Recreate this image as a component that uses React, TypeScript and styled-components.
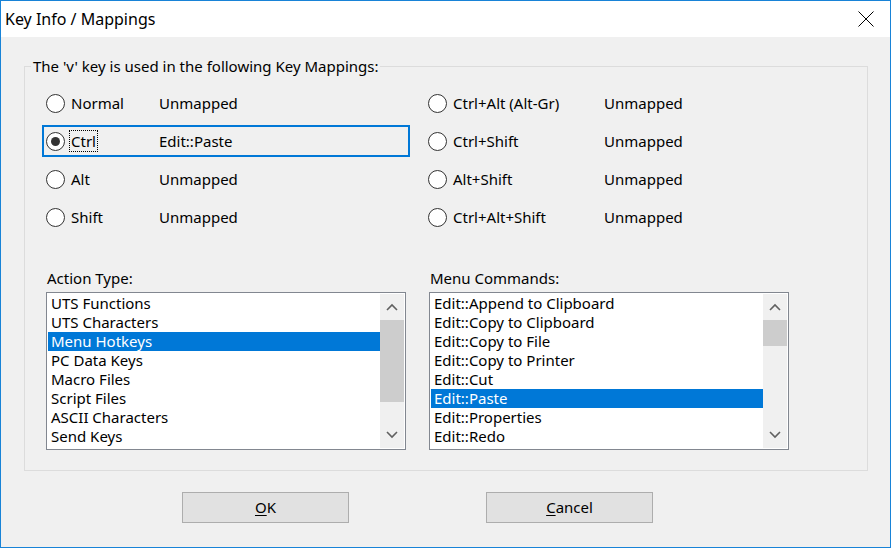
import styled, { createGlobalStyle } from 'styled-components'

const GlobalStyle = createGlobalStyle`
  html, body {
    margin: 0;
    padding: 0;
    background: #ffffff;
  }
  body {
    font-family: 'Noto Sans', 'Liberation Sans', Arial, sans-serif;
    font-size: 15px;
    color: #000;
  }
  * {
    box-sizing: border-box;
  }
`

const Window = styled.div`
  width: 891px;
  height: 548px;
  border: 1px solid #1883d7;
  display: flex;
  flex-direction: column;
  overflow: hidden;
`

const TitleBar = styled.div`
  height: 36px;
  flex: none;
  background: #ffffff;
  display: flex;
  align-items: center;
  justify-content: space-between;
  padding: 0 16px 0 4px;
`

const Title = styled.span`
  font-size: 16px;
  line-height: 20px;
  margin-top: -1px;
`

const CloseButton = styled.span`
  display: flex;
  width: 16px;
  height: 16px;
  margin-top: -1px;
`

const Body = styled.div`
  flex: 1;
  background: #f0f0f0;
  padding: 19px 22px 0 23px;
  display: flex;
  flex-direction: column;
`

const Group = styled.fieldset`
  margin: 0;
  padding: 11px 0 20px 17px;
  border: 1px solid #dcdcdc;
  min-width: 0;
`

const Legend = styled.legend`
  padding: 0 2px;
  margin-left: -11px;
  line-height: 20px;
`

const RadioGrid = styled.div`
  display: grid;
  grid-template-columns: 368px 1fr;
  column-gap: 14px;
  row-gap: 6px;
  grid-auto-flow: column;
  grid-template-rows: repeat(4, 32px);
`

const RadioRow = styled.div<{ $focused?: boolean }>`
  display: flex;
  align-items: center;
  height: 32px;
  padding-left: 2px;
  border: 2px solid ${(p) => (p.$focused ? '#0078d7' : 'transparent')};
`

const Circle = styled.span<{ $checked?: boolean }>`
  width: 19px;
  height: 19px;
  flex: none;
  border-radius: 50%;
  border: 1px solid #333;
  background: #fff;
  display: flex;
  align-items: center;
  justify-content: center;

  &::after {
    content: '';
    width: 9px;
    height: 9px;
    border-radius: 50%;
    background: #333;
    display: ${(p) => (p.$checked ? 'block' : 'none')};
  }
`

const RadioLabel = styled.span<{ $width: number; $focused?: boolean }>`
  width: ${(p) => p.$width}px;
  flex: none;
  margin-left: 4px;
  line-height: 20px;
  margin-top: -1px;

  span {
    padding: 0 1px;
    border: 1px dotted ${(p) => (p.$focused ? '#000' : 'transparent')};
  }
`

const Value = styled.span`
  line-height: 20px;
`

const ListsRow = styled.div`
  display: flex;
  gap: 23px;
  margin-top: 35px;
  margin-left: 4px;
`

const ListColumn = styled.div`
  display: flex;
  flex-direction: column;
  width: 360px;
`

const ListCaption = styled.div`
  line-height: 20px;
  padding-left: 1px;
  margin-bottom: 4px;
`

const ListBox = styled.div`
  height: 158px;
  border: 1px solid #828790;
  background: #fff;
  display: flex;
  padding: 1px;
`

const Items = styled.div`
  flex: 1;
  display: flex;
  flex-direction: column;
`

const Item = styled.div<{ $selected?: boolean }>`
  height: 19px;
  line-height: 18px;
  padding-left: 3px;
  white-space: nowrap;
  background: ${(p) => (p.$selected ? '#0078d7' : 'transparent')};
  color: ${(p) => (p.$selected ? '#fff' : '#000')};
`

const ScrollBar = styled.div`
  width: 24px;
  flex: none;
  background: #f0f0f0;
  display: flex;
  flex-direction: column;
`

const Arrow = styled.div`
  height: 26px;
  flex: none;
  display: flex;
  align-items: center;
  justify-content: center;
`

const Track = styled.div`
  flex: 1;
  position: relative;
`

const Thumb = styled.div`
  position: absolute;
  left: 0;
  right: 0;
  background: #cdcdcd;
`

const ButtonRow = styled.div`
  display: flex;
  gap: 137px;
  padding: 21px 0 0 158px;
`

const Button = styled.div`
  width: 167px;
  height: 31px;
  background: #e1e1e1;
  border: 1px solid #adadad;
  display: flex;
  align-items: center;
  justify-content: center;
  line-height: 20px;

  span {
    margin-top: -1px;
  }

  u {
    text-decoration: underline;
    text-underline-offset: 2px;
  }
`

const Chevron = ({ up }: { up?: boolean }) => (
  <svg width="12" height="8" viewBox="0 0 12 8">
    <path
      d={up ? 'M1 7 L6 2 L11 7' : 'M1 1 L6 6 L11 1'}
      fill="none"
      stroke="#606060"
      strokeWidth="1.6"
    />
  </svg>
)

type Mapping = { key: string; value: string; checked?: boolean }

const leftMappings: Mapping[] = [
  { key: 'Normal', value: 'Unmapped' },
  { key: 'Ctrl', value: 'Edit::Paste', checked: true },
  { key: 'Alt', value: 'Unmapped' },
  { key: 'Shift', value: 'Unmapped' },
]

const rightMappings: Mapping[] = [
  { key: 'Ctrl+Alt (Alt-Gr)', value: 'Unmapped' },
  { key: 'Ctrl+Shift', value: 'Unmapped' },
  { key: 'Alt+Shift', value: 'Unmapped' },
  { key: 'Ctrl+Alt+Shift', value: 'Unmapped' },
]

const actionTypes = [
  'UTS Functions',
  'UTS Characters',
  'Menu Hotkeys',
  'PC Data Keys',
  'Macro Files',
  'Script Files',
  'ASCII Characters',
  'Send Keys',
]

const menuCommands = [
  'Edit::Append to Clipboard',
  'Edit::Copy to Clipboard',
  'Edit::Copy to File',
  'Edit::Copy to Printer',
  'Edit::Cut',
  'Edit::Paste',
  'Edit::Properties',
  'Edit::Redo',
]

function List({
  caption,
  items,
  selected,
  thumbTop,
  thumbHeight,
}: {
  caption: string
  items: string[]
  selected: number
  thumbTop: number
  thumbHeight: number
}) {
  return (
    <ListColumn>
      <ListCaption>{caption}</ListCaption>
      <ListBox>
        <Items>
          {items.map((it, i) => (
            <Item key={it} $selected={i === selected}>
              {it}
            </Item>
          ))}
        </Items>
        <ScrollBar>
          <Arrow>
            <Chevron up />
          </Arrow>
          <Track>
            <Thumb style={{ top: thumbTop, height: thumbHeight }} />
          </Track>
          <Arrow>
            <Chevron />
          </Arrow>
        </ScrollBar>
      </ListBox>
    </ListColumn>
  )
}

export default function App() {
  return (
    <>
      <GlobalStyle />
      <Window>
        <TitleBar>
          <Title>Key Info / Mappings</Title>
          <CloseButton>
            <svg width="16" height="16" viewBox="0 0 16 16">
              <path d="M0.5 0.5 L15.5 15.5 M15.5 0.5 L0.5 15.5" stroke="#000" strokeWidth="1" />
            </svg>
          </CloseButton>
        </TitleBar>
        <Body>
          <Group>
            <Legend>The 'v' key is used in the following Key Mappings:</Legend>
            <RadioGrid>
              {leftMappings.map((m) => (
                <RadioRow key={m.key} $focused={m.checked}>
                  <Circle $checked={m.checked} />
                  <RadioLabel $width={90} $focused={m.checked}>
                    <span>{m.key}</span>
                  </RadioLabel>
                  <Value>{m.value}</Value>
                </RadioRow>
              ))}
              {rightMappings.map((m) => (
                <RadioRow key={m.key}>
                  <Circle />
                  <RadioLabel $width={153}>
                    <span>{m.key}</span>
                  </RadioLabel>
                  <Value>{m.value}</Value>
                </RadioRow>
              ))}
            </RadioGrid>
            <ListsRow>
              <List caption="Action Type:" items={actionTypes} selected={2} thumbTop={0} thumbHeight={82} />
              <List caption="Menu Commands:" items={menuCommands} selected={5} thumbTop={0} thumbHeight={26} />
            </ListsRow>
          </Group>
          <ButtonRow>
            <Button>
              <span>
                <u>O</u>K
              </span>
            </Button>
            <Button>
              <span>
                <u>C</u>ancel
              </span>
            </Button>
          </ButtonRow>
        </Body>
      </Window>
    </>
  )
}
